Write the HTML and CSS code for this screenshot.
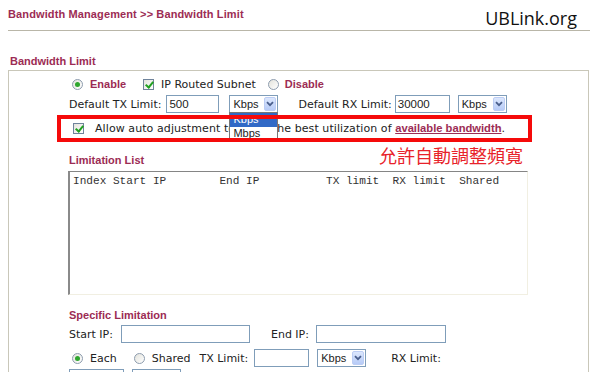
FILE: index.html
```html
<!DOCTYPE html>
<html>
<head>
<meta charset="utf-8">
<link rel="stylesheet" href="styles.css">
</head>
<body>
<div class="top">
  <div class="crumb">Bandwidth Management &gt;&gt; Bandwidth Limit</div>
  <div class="brand">UBLink.org</div>
</div>
<div class="sec-title">Bandwidth Limit</div>
<div class="panel">
  <div class="row r1">
    <span class="radio on"></span><span class="bold m7">Enable</span>
    <span class="check on m17"></span><span class="m7">IP Routed Subnet</span>
    <span class="radio m12"></span><span class="bold m6">Disable</span>
  </div>
  <div class="row r2">
    <span>Default TX Limit:</span>
    <span class="input w53 m5">500</span>
    <span class="select m10">Kbps<span class="arrow"><svg width="8" height="6" viewBox="0 0 8 6"><path d="M1 1.2 L4 4.2 L7 1.2" fill="none" stroke="#4a5f8c" stroke-width="1.8"/></svg></span>
      <span class="dropdown"><span class="opt sel">Kbps</span><span class="opt">Mbps</span></span>
    </span>
    <span class="m20">Default RX Limit:</span>
    <span class="input w55 m3">30000</span>
    <span class="select m8">Kbps<span class="arrow"><svg width="8" height="6" viewBox="0 0 8 6"><path d="M1 1.2 L4 4.2 L7 1.2" fill="none" stroke="#4a5f8c" stroke-width="1.8"/></svg></span></span>
  </div>
  <div class="row mark">
    <span class="check on m12"></span>
    <span class="m11 marktext">Allow auto adjustment to make the best utilization of <a class="link">available bandwidth</a>.</span>
  </div>
  <div class="row listhead">
    <span class="bold head">Limitation List</span>
    <span class="note">允許自動調整頻寬</span>
  </div>
  <div class="list">Index Start IP        End IP          TX limit  RX limit  Shared</div>
  <div class="bold head2">Specific Limitation</div>
  <div class="row r3">
    <span>Start IP:</span>
    <span class="input w129 m8"></span>
    <span class="m21">End IP:</span>
    <span class="input w130 m7"></span>
  </div>
  <div class="row r4">
    <span class="radio on m3"></span><span class="m7">Each</span>
    <span class="radio m17"></span><span class="m7">Shared</span>
    <span class="m9">TX Limit:</span>
    <span class="input w55 m6"></span>
    <span class="select m8">Kbps<span class="arrow"><svg width="8" height="6" viewBox="0 0 8 6"><path d="M1 1.2 L4 4.2 L7 1.2" fill="none" stroke="#4a5f8c" stroke-width="1.8"/></svg></span></span>
    <span class="m25">RX Limit:</span>
  </div>
  <div class="row r5">
    <span class="input w55"></span>
    <span class="input w49 m8"></span>
  </div>
</div>
</body>
</html>
```

FILE: styles.css
```css
* { box-sizing: border-box; }
body {
  margin: 0;
  background: #fff;
  font-family: "DejaVu Sans", Verdana, sans-serif;
  font-size: 11px;
  color: #222;
}
.top {
  display: flex;
  justify-content: space-between;
  align-items: flex-start;
  margin-left: 8px;
  width: 582px;
  height: 31px;
  border-bottom: 1px solid #b9b6a8;
}
.crumb {
  font: bold 11px/13px "Liberation Sans", Arial, sans-serif;
  letter-spacing: 0.12px;
  color: #9c2c54;
  margin-top: 8px;
}
.brand {
  font: 18px/24px "Open Sans", sans-serif;
  color: #111;
  margin-top: 6px;
  margin-right: 13px;
}
.sec-title {
  font: bold 11px/13px "Liberation Sans", Arial, sans-serif;
  color: #9c2c54;
  margin: 24px 0 2px 10px;
}
.panel {
  margin-left: 8px;
  width: 581px;
  border: 1px solid #c9c7b9;
  padding: 0 0 20px 60px;
}
.bold {
  font: bold 11px/13px "Liberation Sans", Arial, sans-serif;
  color: #9c2c54;
}
.row {
  display: flex;
  align-items: center;
  white-space: nowrap;
}
.r1 { margin-top: 4px; height: 18px; padding-left: 3px; }
.r2 { margin-top: 2px; height: 18px; }
.mark {
  position: relative;
  margin: 2px 0 0 -12px;
  width: 475px;
  height: 27px;
  padding: 4px;
}
.mark::after {
  content: "";
  position: absolute;
  inset: 0;
  border: 4px solid #f50a0a;
  z-index: 3;
}
.marktext {
  font-size: 11px;
  letter-spacing: 0.08px;
}
.link {
  font: bold 11.2px "Liberation Sans", Arial, sans-serif;
  letter-spacing: 0;
  color: #9c2c54;
  text-decoration: underline;
}
.listhead {
  height: 29px;
  width: 460px;
  align-items: flex-start;
  justify-content: space-between;
}
.head { margin-top: 12px; }
.note {
  font: 18px/20px "Noto Sans CJK TC", sans-serif;
  color: #e8222a;
  margin: 3px 6px 0 0;
}
.list {
  margin-left: -1px;
  width: 460px;
  height: 124px;
  border-top: 1px solid #858585;
  border-left: 2px solid #8a8a8a;
  border-right: 1px solid #f1efe2;
  border-bottom: 1px solid #f1efe2;
  padding: 3px 0 0 3px;
  font: 11.1px/13px "Liberation Mono", "Courier New", monospace;
  color: #333;
  white-space: pre;
}
.head2 { margin-top: 14px; }
.r3 { margin-top: 3px; height: 18px; }
.r4 { margin-top: 6px; height: 18px; }
.r5 { margin-top: 2px; height: 18px; }

.m3 { margin-left: 3px; } .m4 { margin-left: 4px; } .m5 { margin-left: 5px; }
.m6 { margin-left: 6px; } .m7 { margin-left: 7px; } .m8 { margin-left: 8px; }
.m9 { margin-left: 9px; } .m10 { margin-left: 10px; } .m11 { margin-left: 11px; }
.m12 { margin-left: 12px; } .m17 { margin-left: 17px; } .m20 { margin-left: 20px; }
.m21 { margin-left: 21px; } .m25 { margin-left: 25px; }

.input {
  display: inline-flex;
  align-items: center;
  height: 18px;
  border: 1px solid #7f9db9;
  background: #fff;
  padding-left: 2px;
  font: 11.5px "Liberation Sans", Arial, sans-serif;
  color: #222;
}
.w49 { width: 49px; } .w53 { width: 53px; } .w55 { width: 55px; }
.w129 { width: 129px; } .w130 { width: 130px; }

.select {
  position: relative;
  display: inline-flex;
  align-items: center;
  justify-content: space-between;
  width: 49px;
  height: 18px;
  border: 1px solid #7f9db9;
  background: #fff;
  padding: 0 1px 0 3px;
  font: 11px "Liberation Sans", Arial, sans-serif;
  color: #222;
}
.arrow {
  display: flex;
  align-items: center;
  justify-content: center;
  width: 12px;
  height: 14px;
  border: 1px solid #bccdf4;
  border-radius: 2px;
  background: linear-gradient(#dce7fd, #b7cbf7);
}
.dropdown {
  position: absolute;
  top: 16px;
  left: -1px;
  width: 49px;
  height: 30px;
  border: 1px solid #777;
  background: #fff;
  z-index: 2;
  display: flex;
  flex-direction: column;
}
.opt {
  display: block;
  height: 14px;
  padding-left: 3px;
  font: 11px/12px "Liberation Sans", Arial, sans-serif;
  color: #222;
}
.opt.sel { background: #3169c6; color: #fff; }

.radio {
  display: inline-block;
  position: relative;
  width: 11px;
  height: 11px;
  border: 1px solid #8d9cae;
  border-radius: 50%;
  background: linear-gradient(135deg, #e3e3dc, #fff);
}
.radio.on::after {
  content: "";
  position: absolute;
  left: 2px;
  top: 2px;
  width: 5px;
  height: 5px;
  border-radius: 50%;
  background: #2ea62e;
}
.check {
  display: inline-block;
  position: relative;
  width: 11px;
  height: 11px;
  border: 1px solid #6f839b;
  background: linear-gradient(135deg, #e3e3dc, #fff);
}
.check.on::after {
  content: "";
  position: absolute;
  left: 3px;
  top: 0px;
  width: 3px;
  height: 6px;
  border-right: 2px solid #21a121;
  border-bottom: 2px solid #21a121;
  transform: rotate(40deg);
}
```
